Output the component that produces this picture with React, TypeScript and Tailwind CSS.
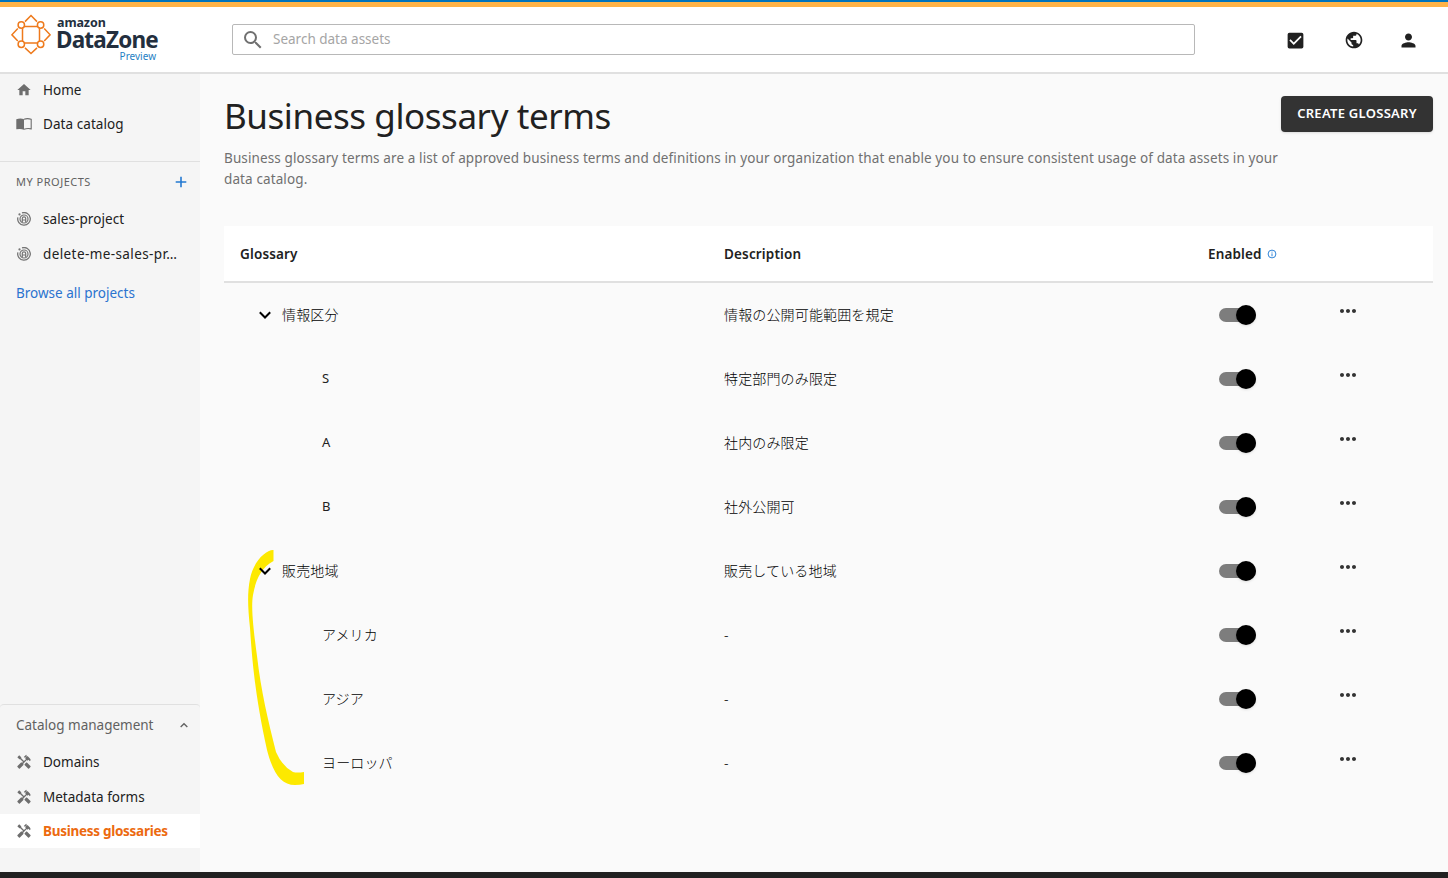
import { MdCheckBox, MdHandyman, MdHome, MdMoreHoriz, MdPerson, MdPublic, MdSearch } from 'react-icons/md';

type Term = { name: string; description: string; parent?: boolean };

const terms: Term[] = [
  { name: '情報区分', description: '情報の公開可能範囲を規定', parent: true },
  { name: 'S', description: '特定部門のみ限定' },
  { name: 'A', description: '社内のみ限定' },
  { name: 'B', description: '社外公開可' },
  { name: '販売地域', description: '販売している地域', parent: true },
  { name: 'アメリカ', description: '-' },
  { name: 'アジア', description: '-' },
  { name: 'ヨーロッパ', description: '-' },
];

function Logo() {
  return (
    <div className="flex w-[221px] shrink-0 pl-[11px] pt-[7px]">
      <svg width="40" height="42" viewBox="0 0 40 42" fill="none" stroke="#ee7a1c" strokeWidth="1.5">
        <path d="M14 7.6 20 1.5l6 6.1M14 33.9l6 5.6 6-5.6M6.8 14.5.9 20.8 6.8 27M33.2 14.5l5.9 6.3-5.9 6.2" />
        <path d="M13.5 12.5h13M13.5 29h13M11.5 14.2v13.3M28.5 14.2v13.3" />
        <circle cx="10.3" cy="11" r="3.2" />
        <circle cx="29.6" cy="11" r="3.2" />
        <circle cx="10.3" cy="30.3" r="3.2" />
        <circle cx="29.6" cy="30.3" r="3.2" />
      </svg>
      <div className="ml-[5px] w-[102px] pt-px text-[#232f3e]">
        <div className="pl-px text-[12.5px] leading-[15px] font-bold tracking-[-0.1px]">amazon</div>
        <div className="text-[22.5px] leading-[20px] font-bold tracking-[-0.8px]">DataZone</div>
        <div className="pr-[2px] text-right text-[10px] leading-[12px] text-[#1f7fc4]">Preview</div>
      </div>
    </div>
  );
}

function BookIcon() {
  return (
    <svg width="16" height="12" viewBox="0 0 16 12" className="text-[#6e6e6e]">
      <path d="M.3 1.3Q4.5-.4 8 1.3V11.7Q4.5 10.3.3 11.3Z" fill="currentColor" />
      <path d="M8 1.3Q11.5 0 15.2 1.3V10.9Q11.5 10 8 11.3" fill="none" stroke="currentColor" strokeWidth="1.1" />
    </svg>
  );
}

function ProjectIcon() {
  return (
    <svg width="14" height="14" viewBox="0 0 14 14" fill="none" stroke="#757575" className="ml-px">
      <path d="M5 .9A6.3 6.3 0 1 1 .9 5.3" strokeWidth="1.3" />
      <circle cx="2.5" cy="2.4" r="1.1" fill="#757575" stroke="none" />
      <circle cx="7" cy="7" r="4" strokeWidth="1.2" />
      <path d="M5.3 10V6.5Q5.3 4.9 7 4.9T8.7 6.5V10M5.5 8h3" strokeWidth="1.2" />
    </svg>
  );
}

function Chevron({ className, up }: { className: string; up?: boolean }) {
  return (
    <svg width="12" height="8" viewBox="0 0 12 8" className={className} fill="none" stroke="currentColor" strokeWidth="2">
      <path d={up ? 'M1 7 6 2l5 5' : 'M.8 1.3 6 6.5l5.2-5.2'} />
    </svg>
  );
}

type NavItemProps = { icon: React.ReactNode; label: string; labelClass?: string; active?: boolean };

function NavItem({ icon, label, labelClass = '', active }: NavItemProps) {
  return (
    <a className={`flex h-[34px] items-center pl-4 ${active ? 'bg-white font-bold text-[#ec6a10]' : 'text-[#212121]'}`}>
      <span className="flex w-[27px] shrink-0 items-center text-[#6e6e6e]">{icon}</span>
      <span className={`whitespace-nowrap ${labelClass}`}>{label}</span>
    </a>
  );
}

function Sidebar() {
  return (
    <aside className="flex w-[200px] shrink-0 flex-col bg-[#f5f5f5] text-[13.5px]">
      <div className="-mt-px">
        <NavItem icon={<MdHome size={16} />} label="Home" />
        <NavItem icon={<BookIcon />} label="Data catalog" labelClass="tracking-[0.07px]" />
      </div>
      <div className="mt-5 border-t border-[#e0e0e0]" />
      <div className="flex h-10 items-center justify-between pl-4 pr-[13px] text-[11px] tracking-[0.5px] text-[#616161]">
        MY PROJECTS
        <svg width="12" height="12" viewBox="0 0 12 12" stroke="#2379d1" strokeWidth="1.6">
          <path d="M6 .7v10.6M.7 6h10.6" />
        </svg>
      </div>
      <div className="flex flex-col gap-px">
        <NavItem icon={<ProjectIcon />} label="sales-project" labelClass="tracking-[0.08px]" />
        <NavItem icon={<ProjectIcon />} label="delete-me-sales-pr…" labelClass="tracking-[0.4px]" />
      </div>
      <a className="mt-3 pl-4 leading-5 text-[#2a73cf]">Browse all projects</a>

      <div className="mt-auto rounded-t border-t border-[#e0e0e0] pb-6">
        <div className="flex h-10 items-center justify-between pl-4 pr-3 text-[#616161]">
          Catalog management
          <Chevron up className="h-[6px] w-2" />
        </div>
        <NavItem icon={<MdHandyman size={16} />} label="Domains" />
        <div className="h-px" />
        <NavItem icon={<MdHandyman size={16} />} label="Metadata forms" />
        <NavItem icon={<MdHandyman size={16} />} label="Business glossaries" labelClass="tracking-[-0.28px]" active />
      </div>
    </aside>
  );
}

function Toggle() {
  return (
    <span className="ml-[11px] flex h-[14px] w-[37px] items-center justify-end rounded-full bg-[#7d7d7d]">
      <span className="size-5 shrink-0 rounded-full bg-black shadow-sm" />
    </span>
  );
}

function TermRow({ term }: { term: Term }) {
  const latin = term.name.length === 1;
  return (
    <div className="grid h-16 grid-cols-[484px_484px_133px_1fr] items-center pl-4">
      {term.parent ? (
        <div className="flex items-center pl-[19px]">
          <Chevron className="mr-[11px] text-black" />
          <span className="pb-0.5 font-light text-black">{term.name}</span>
        </div>
      ) : (
        <div className={`pl-[82px] ${latin ? 'text-[13px]' : 'pb-0.5 font-light text-black'}`}>{term.name}</div>
      )}
      <div className="pb-0.5 font-light text-black">{term.description}</div>
      <Toggle />
      <MdMoreHoriz size={24} className="mb-2 ml-[-5px] text-[#333]" />
    </div>
  );
}

export default function App() {
  return (
    <div className="flex h-[878px] w-[1448px] flex-col overflow-hidden bg-[#fafafa] font-['Noto_Sans','Noto_Sans_CJK_JP',sans-serif] text-[#212121]">
      <header className="flex h-[74px] shrink-0 flex-col border-b-2 border-[#e0e0e0] bg-white">
        <div className="h-[2px] shrink-0 bg-[#0073bb]" />
        <div className="h-[5px] shrink-0 bg-[#ffb347]" />
        <div className="flex flex-1">
          <Logo />
          <div className="ml-[11px] mt-[17px] flex h-[31px] w-[963px] items-center rounded-[2px] border border-[#b8b8b8] pl-2 text-[13.5px] text-[#a5a5a5]">
            <MdSearch size={24} className="mr-2 text-[#707070]" />
            Search data assets
          </div>
          <div className="ml-auto flex items-center pt-px pr-[29px]">
            <MdCheckBox size={21} />
            <MdPublic size={20} className="ml-[38px]" />
            <MdPerson size={21} className="ml-[34px]" />
          </div>
        </div>
      </header>

      <div className="flex flex-1">
        <Sidebar />
        <main className="flex-1 pl-6 pr-[15px]">
          <div className="flex h-[152px] justify-between pt-[22px]">
            <div>
              <h1 className="-mt-px text-[35px] leading-[42px] tracking-[-0.43px]">Business glossary terms</h1>
              <p className="mt-[11px] w-[1057px] text-[13.5px] leading-[21px] tracking-[0.115px] text-[#707070]">
                Business glossary terms are a list of approved business terms and definitions in your organization that enable you to ensure consistent usage of data assets in your
                <br />
                data catalog.
              </p>
            </div>
            <button className="h-9 w-[152px] shrink-0 rounded bg-[#333] text-[13px] font-semibold tracking-[0.28px] text-white shadow">CREATE GLOSSARY</button>
          </div>

          <section className="relative text-[13.5px]">
            {/* Hand-drawn marker around the second glossary */}
            <svg className="absolute left-[20px] top-[320px]" width="64" height="242" viewBox="0 0 64 242">
              <path
                d="M29.5 4C22 3.5 9 16 6 33C3 48 4 63 6 82C9 130 14 162 23 204C29 227 37 239 51 239Q56 239 60 238V226Q53 227 49 226Q38 220 32 206C24 174 17 145 13 110C9 80 7 61 9 49C12 33 17 22 29.5 15Z"
                fill="#fde900"
              />
            </svg>
            <div className="grid h-[57px] grid-cols-[484px_484px_1fr] items-center border-b-2 border-[#e0e0e0] bg-white pt-0.5 pl-4 font-semibold tracking-[0.15px]">
              <span>Glossary</span>
              <span>Description</span>
              <span className="flex items-center">
                Enabled
                <svg width="10" height="10" viewBox="0 0 10 10" className="mb-0.5 ml-[5px]" fill="none" stroke="#1976d2">
                  <circle cx="5" cy="5" r="3.9" strokeWidth=".9" />
                  <path d="M5 4.4v2.9M5 2.7v.9" strokeWidth=".9" />
                </svg>
              </span>
            </div>
            <div className="relative text-[14px] tracking-[0.15px]">
              {terms.map((term) => (
                <TermRow key={term.name} term={term} />
              ))}
            </div>
          </section>
        </main>
      </div>
      <footer className="h-[6px] shrink-0 bg-[#212121]" />
    </div>
  );
}
